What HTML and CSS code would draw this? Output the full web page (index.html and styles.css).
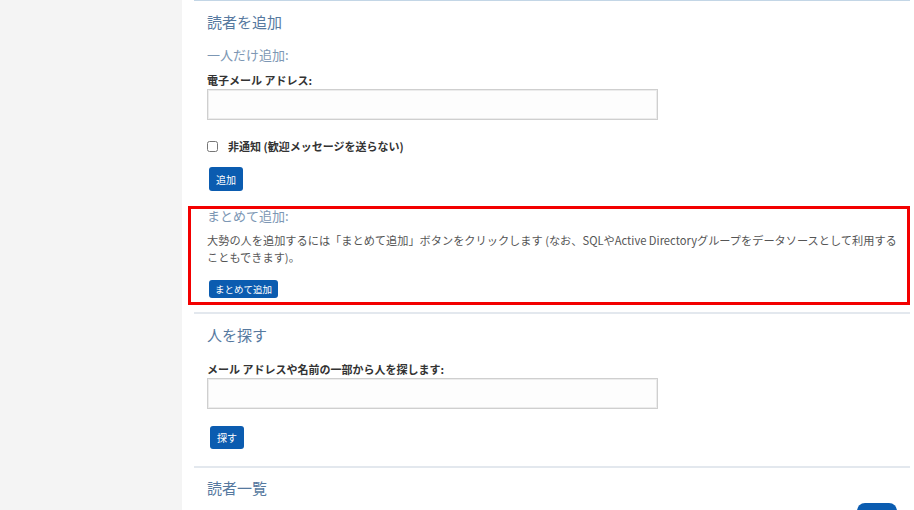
FILE: index.html
```html
<!DOCTYPE html>
<html lang="ja">
<head>
    <meta charset="UTF-8">
    <meta name="viewport" content="width=device-width, initial-scale=1.0">
    <title>読者を追加</title>
    <link rel="stylesheet" href="styles.css">
</head>
<body>

<div class="sidebar"></div>

<div class="main">
    <div class="section first">
        <h2>読者を追加</h2>
        <h3>一人だけ追加:</h3>
        <label class="field-label" for="add-email">電子メール アドレス:</label>
        <input type="text" id="add-email" class="text-input">
        <div class="check-row">
            <input type="checkbox" id="no-notify">
            <label for="no-notify">非通知 (歓迎メッセージを送らない)</label>
        </div>
        <button class="btn">追加</button>

        <div class="bulk-box">
            <h3 class="bulk-title">まとめて追加:</h3>
            <p class="bulk-text">大勢の人を追加するには「まとめて追加」ボタンをクリックします (なお、SQLやActive Directoryグループをデータソースとして利用することもできます)。</p>
            <button class="btn btn-small">まとめて追加</button>
        </div>
    </div>

    <div class="section">
        <h2>人を探す</h2>
        <label class="field-label search-label" for="find-user">メール アドレスや名前の一部から人を探します:</label>
        <input type="text" id="find-user" class="text-input">
        <button class="btn">探す</button>
    </div>

    <div class="section last">
        <h2>読者一覧</h2>
        <div class="corner-btn"></div>
    </div>
</div>

</body>
</html>
```

FILE: styles.css
```css
html, body {
    margin: 0;
    height: 100%;
    overflow: hidden;
}
body {
    display: flex;
    background: #fff;
    font-family: "Noto Sans CJK JP", "Noto Sans", sans-serif;
    color: #333;
}
.sidebar {
    width: 182px;
    flex-shrink: 0;
    background: #f4f4f4;
}
.main {
    flex: 1;
    padding: 0 4px 0 12px;
}
.section {
    border-top: 2px solid #e3e8ee;
    padding: 11px 0 17px 13px;
}
.section.first {
    border-top: 1px solid #c3d6e6;
    padding-top: 11px;
    padding-bottom: 7px;
}
h2 {
    margin: 0;
    font-size: 15px;
    line-height: 20px;
    font-weight: normal;
    color: #56799f;
}
h3 {
    margin: 13px 0 0;
    font-size: 13px;
    line-height: 20px;
    font-weight: normal;
    color: #7d97b4;
}
.field-label {
    display: block;
    margin-top: 7px;
    font-size: 11px;
    line-height: 16px;
    font-weight: bold;
    color: #333;
}
.search-label {
    margin-top: 16px;
}
.text-input {
    display: block;
    width: 451px;
    height: 31px;
    margin-top: 1px;
    box-sizing: border-box;
    border: 1px solid #cfcfcf;
    box-shadow: inset 0 0 0 1px #ececec;
    background: #fdfdfd;
}
.check-row {
    display: flex;
    align-items: center;
    margin-top: 16px;
    height: 20px;
    font-size: 11px;
    font-weight: bold;
}
.check-row input {
    width: 11px;
    height: 11px;
    margin: 0 10px 0 0;
}
.btn {
    display: block;
    margin: 11px 0 0 2px;
    height: 24px;
    padding: 0 7px;
    border: none;
    border-radius: 3px;
    background: #0b5cb0;
    color: #fff;
    font-family: inherit;
    font-size: 10px;
}
.section .text-input + .btn {
    margin-top: 17px;
    margin-left: 3px;
    height: 23px;
}
.bulk-box {
    margin: 15px 0 0 -19px;
    border: 3px solid #f30000;
    padding: 0 0 4px 16px;
}
.bulk-title {
    margin: 0;
    line-height: 14px;
}
.bulk-text {
    margin: 9px 0 0;
    font-size: 11.2px;
    line-height: 17px;
    color: #555;
}
.btn-small {
    margin-top: 14px;
    height: 18px;
    padding: 0 6px;
    font-size: 9.5px;
}
.section.last {
    position: relative;
    padding-top: 10px;
    height: 30px;
}
.corner-btn {
    position: absolute;
    right: 13px;
    top: 35px;
    width: 40px;
    height: 20px;
    border-radius: 8px;
    background: #0b5cb0;
}
```
